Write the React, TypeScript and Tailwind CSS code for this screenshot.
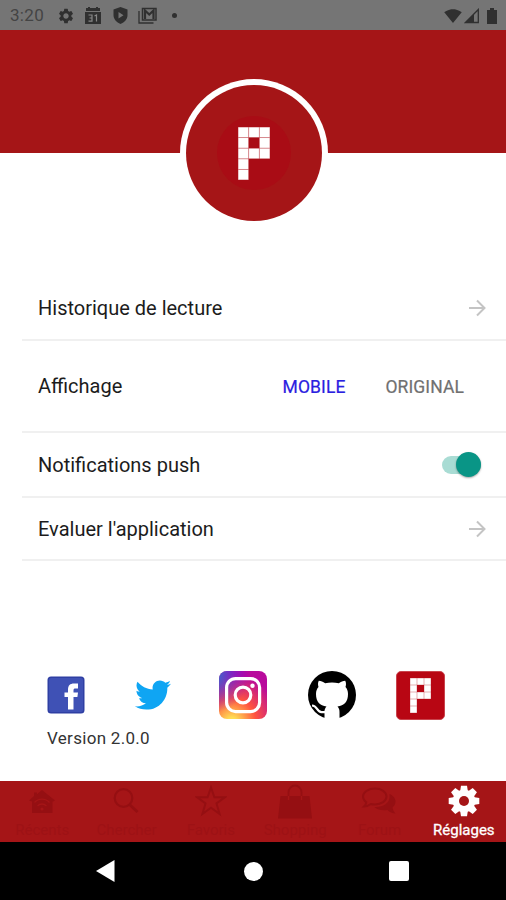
import type { ReactNode } from 'react';
import { FaTwitter } from 'react-icons/fa';
import { MdSettings, MdSignalWifi4Bar } from 'react-icons/md';

const PIXELS = [
  [0, 0], [1, 0], [2, 0],
  [0, 1], [2, 1],
  [0, 2], [1, 2], [2, 2],
  [0, 3],
  [0, 4],
];

function PixelLogo({ className }: { className: string }) {
  return (
    <svg viewBox="0 0 30 50" preserveAspectRatio="none" className={className}>
      <path d="M0 0H30V30H10V50H0ZM10 10V20H20V10Z" fill="#cf7278" fillRule="evenodd" />
      {PIXELS.map(([x, y]) => (
        <rect key={`${x}-${y}`} x={x * 10 + 0.4} y={y * 10 + 0.4} width="9.2" height="9.2" fill="#fff" />
      ))}
    </svg>
  );
}

function StatusBar() {
  return (
    <div className="flex h-[30px] items-center bg-[#757575] pt-px pl-[10px] pr-[9px] text-[#303030]">
      <span className="w-[47px] text-[17px] tracking-[0.3px] text-[#444]">3:20</span>
      <MdSettings size={18} />
      <svg viewBox="0 0 16 18" className="ml-[10px] h-[18px] w-4" fill="currentColor">
        <path d="M1 1h2V0h2v1h6V0h2v1h2v3H1zM0 5h16v12H0z" />
        <path d="M3.5 8H7v6.2H3.5M4.5 11H7M9.5 9l2-1v6.5" fill="none" stroke="#888" strokeWidth="1.2" />
      </svg>
      <svg viewBox="0 0 15 17" className="ml-[12px] h-[17px] w-[15px]" fill="currentColor">
        <path d="M7.5 0 14.5 2.5V8C14.5 12 11.5 15.5 7.5 17 3.5 15.5 .5 12 .5 8V2.5Z" />
        <path d="M5.5 5v6.5l5-3.25z" fill="#757575" />
      </svg>
      <svg viewBox="0 0 19 17" className="ml-[10px] h-[17px] w-[19px]" fill="none" stroke="currentColor">
        <path d="M1 4v12h14.5" strokeWidth="1.3" />
        <path d="M4.5 1.5h13.500v11.500H4.500z" strokeWidth="1.5" />
        <path d="M7 12V3.500l4.250 4L15.500 3.500v8.500" strokeWidth="2.2" />
      </svg>
      <span className="ml-[15px] size-[5px] rounded-full bg-current" />
      <div className="ml-auto flex items-center">
        <MdSignalWifi4Bar size={18} />
        <svg viewBox="0 0 16 16" className="ml-[2px] size-4">
          <path d="M14.3 1.500V14.500H1.500Z" fill="none" stroke="currentColor" strokeWidth="1.3" />
          <path d="M1 15 10 6V15Z" fill="currentColor" />
        </svg>
        <svg viewBox="0 0 10 16" className="ml-[7px] h-4 w-[10px]" fill="currentColor">
          <path d="M3 0h4v2h3v14H0V2h3z" />
        </svg>
      </div>
    </div>
  );
}

function SettingRow({ label, className, children }: { label: string; className: string; children: ReactNode }) {
  return (
    <div className={`ml-[22px] flex items-center border-b-2 border-[#f0f0f0] pl-4 ${className}`}>
      <span className="text-[20px] text-[#1c1c1c]">{label}</span>
      <div className="ml-auto flex items-center">{children}</div>
    </div>
  );
}

function Arrow() {
  return (
    <svg viewBox="0 0 18 18" className="mr-[20px] size-[18px]" fill="none" stroke="#c4c4c4" strokeWidth="2">
      <path d="M1 9H16M9 1.500 16.500 9 9 16.500" />
    </svg>
  );
}

function FacebookIcon() {
  return (
    <svg viewBox="0 0 38 38" className="size-[38px]">
      <rect x=".5" y=".5" width="37" height="37" rx="3.5" fill="#2f3fa3" />
      <rect x="2" y="2" width="34" height="34" rx="2" fill="#3f51b5" />
      <path d="M21 33.500V21H17.500V16.500H21V13.500C21 9.500 23 7.500 27 7.500H31V12.500H28.500C27 12.500 26.500 13 26.500 14.500V16.500H31L30.400 21H26.500V33.500Z" fill="#fff" />
    </svg>
  );
}

function InstagramIcon() {
  return (
    <svg viewBox="0 0 48 48" className="size-12">
      <defs>
        <radialGradient id="ig-warm" cx=".27" cy="1.07" r="1">
          <stop offset="0" stopColor="#fd5" />
          <stop offset=".1" stopColor="#fd5" />
          <stop offset=".5" stopColor="#ff543e" />
          <stop offset="1" stopColor="#b80a9c" />
        </radialGradient>
        <radialGradient id="ig-cool" cx="-.16" cy=".07" r=".8">
          <stop offset="0" stopColor="#3771c8" />
          <stop offset=".13" stopColor="#3771c8" />
          <stop offset="1" stopColor="#60f" stopOpacity="0" />
        </radialGradient>
      </defs>
      <rect width="48" height="48" rx="8" fill="url(#ig-warm)" />
      <rect width="48" height="48" rx="8" fill="url(#ig-cool)" />
      <g fill="none" stroke="#fff" strokeWidth="3.2">
        <rect x="7.6" y="7.6" width="33" height="33" rx="9" />
        <circle cx="24" cy="24" r="7.8" />
      </g>
      <circle cx="33.5" cy="14.7" r="2.2" fill="#fff" />
    </svg>
  );
}

function GithubIcon() {
  return (
    <svg viewBox="0 0 48 48" className="size-12">
      <circle cx="24" cy="24" r="24" fill="#000" />
      <path d="M16.500 49V39.500C17 37.500 17.500 36.500 18.500 35.500C12 34.500 8 31 8 23C8 20 9 17.500 10.500 16C9.800 14 9.800 11.500 10.800 9.800C13 9.800 15 10.800 17.200 12.300C21.500 11.200 26.500 11.200 30.800 12.300C33 10.800 35 9.800 37.200 9.800C38.200 11.500 38.200 14 37.500 16C39 17.500 40 20 40 23C40 31 36 34.500 29.500 35.500C31 37 31.500 38.500 31.500 41V49Z" fill="#fff" />
      <path d="M4 34.500C9.500 34.500 8.500 41 13.500 41.200H18" fill="none" stroke="#fff" strokeWidth="2.2" />
    </svg>
  );
}

function HomeIcon() {
  return (
    <svg viewBox="0 0 26 26" className="size-[26px]">
      <path d="M13 2 26 12.500l-2 1-.5.1V25H3V13.600L0 12.500 5 8V4.500h3v1.700z" fill="currentColor" />
      <path d="M5.500 14.500c4-4.500 11-4.500 15 0M8.500 18c2.500-2.700 6.500-2.700 9 0" fill="none" stroke="#a51517" strokeWidth="1.3" />
      <circle cx="13" cy="21" r="1.6" fill="#a51517" />
    </svg>
  );
}

function SearchIcon() {
  return (
    <svg viewBox="0 0 26 26" className="size-[26px]" fill="none" stroke="currentColor">
      <circle cx="10.500" cy="10" r="8.800" strokeWidth="2.200" />
      <path d="M16.500 16.500 24.500 24" strokeWidth="2.800" />
    </svg>
  );
}

function StarIcon() {
  return (
    <svg viewBox="0 0 32 32" className="size-8" fill="none" stroke="currentColor" strokeWidth="2">
      <path d="M16 2.500 19.400 12.300H29.800L21.500 18.500 24.600 29 16 22.700 7.400 29 10.500 18.500 2.200 12.300H12.600Z" />
    </svg>
  );
}

function BagIcon() {
  return (
    <svg viewBox="0 0 34 36" className="h-9 w-[34px]">
      <path d="M2.500 13H31.500L34 35.500H0Z" fill="currentColor" />
      <path d="M10.500 16V9.500a6.500 7 0 0 1 13 0v6.500" fill="none" stroke="currentColor" strokeWidth="1.800" />
      <path d="M10.500 13v4M23.500 13v4" stroke="#a51517" strokeWidth="1.500" />
    </svg>
  );
}

function ChatIcon() {
  return (
    <svg viewBox="0 0 36 30" className="h-[30px] w-9">
      <path d="M14 2.500C20.500 2.500 25.500 6 25.500 10.500S20.500 18.500 14 18.500C12.500 18.500 11 18.300 9.800 18C7.500 19.800 5 20.500 3 20.500C4.300 19.300 5.200 17.700 5.300 16.200C3.300 14.800 2 12.800 2 10.500C2 6 7.500 2.500 14 2.500Z" fill="none" stroke="currentColor" strokeWidth="2" />
      <path d="M28.500 8C32 9.500 34.500 12.300 34.500 15.500C34.500 18 33.200 20 31.500 21.500C32 24 33 26 34.500 27.500C31.500 27.500 28.500 26 26.500 24C21.500 25 16 23.700 13.500 21C21.500 21.500 28.500 17.500 28.500 11Z" fill="currentColor" />
    </svg>
  );
}

function GearIcon() {
  return (
    <svg viewBox="-16 -16 32 32" className="size-8">
      {[0, 45, 90, 135].map((deg) => (
        <path key={deg} d="M-3 -15.300H3L4 -9V9L3 15.300H-3L-4 9V-9Z" transform={`rotate(${deg})`} fill="#fff" />
      ))}
      <circle r="11.300" fill="#fff" />
      <circle r="5" fill="#a51517" />
    </svg>
  );
}

const TABS = [
  { label: 'Récents', icon: <HomeIcon /> },
  { label: 'Chercher', icon: <SearchIcon /> },
  { label: 'Favoris', icon: <StarIcon /> },
  { label: 'Shopping', icon: <BagIcon /> },
  { label: 'Forum', icon: <ChatIcon /> },
  { label: 'Réglages', icon: <GearIcon />, active: true },
];

export default function App() {
  return (
    <div className="flex h-[900px] w-[506px] flex-col overflow-hidden bg-white font-['Roboto',sans-serif]">
      <StatusBar />

      {/* Header */}
      <div className="flex h-[123px] shrink-0 justify-center bg-[#a51517] pt-[49px]">
        <div className="z-10 ml-px flex size-[148px] shrink-0 items-center justify-center rounded-full bg-white">
          <div className="flex size-[136px] items-center justify-center rounded-full bg-[#a51517]">
            <div className="flex size-[74px] items-center justify-center rounded-full bg-[#a90c15]">
              <PixelLogo className="h-[53px] w-[32px]" />
            </div>
          </div>
        </div>
      </div>

      {/* Settings */}
      <div className="pt-[123px]">
        <SettingRow label="Historique de lecture" className="h-[65px]">
          <Arrow />
        </SettingRow>
        <SettingRow label="Affichage" className="h-[92px]">
          <div className="flex gap-[40px] pt-[2px] pr-[42px] text-[17.5px] tracking-[0.1px]">
            <button className="text-[#2a20e0] [-webkit-text-stroke:0.2px]">MOBILE</button>
            <button className="text-[#707070] [-webkit-text-stroke:0.2px]">ORIGINAL</button>
          </div>
        </SettingRow>
        <SettingRow label="Notifications push" className="h-[65px]">
          <div className="mr-[25px] flex h-[18px] w-[39px] items-center justify-end rounded-full bg-[#a9dcd4]">
            <span className="size-[25px] shrink-0 rounded-full bg-[#099586] shadow-[0_1px_2px_rgba(0,0,0,0.35)]" />
          </div>
        </SettingRow>
        <SettingRow label="Evaluer l'application" className="h-[63px]">
          <Arrow />
        </SettingRow>
      </div>

      {/* Links */}
      <div className="mt-[109px] flex h-[50px] items-center pl-[47px]">
        <FacebookIcon />
        <FaTwitter size={36} className="ml-[50px] text-[#0fa5f3]" />
        <div className="ml-[48px]"><InstagramIcon /></div>
        <div className="ml-[41px]"><GithubIcon /></div>
        <div className="ml-[40px] flex size-[49px] items-center justify-center rounded-[5px] border border-[#c9444d] bg-[#b80613]">
          <PixelLogo className="h-[35px] w-[21px]" />
        </div>
      </div>
      <p className="mt-[6px] pl-[47px] text-[17px] leading-6 tracking-[0.3px] text-[#333]">Version 2.0.0</p>

      {/* Tabs */}
      <nav className="mt-auto grid h-[61px] shrink-0 grid-cols-6 bg-[#a51517]">
        {TABS.map((tab) => (
          <div key={tab.label} className={`flex flex-col items-center ${tab.active ? 'text-white' : 'text-[#950f12]'}`}>
            <div className="flex h-[40px] items-center justify-center">{tab.icon}</div>
            <span className={`text-[15px] leading-[18px] ${tab.active ? '[-webkit-text-stroke:0.3px]' : 'text-[#9d1215]'}`}>{tab.label}</span>
          </div>
        ))}
      </nav>

      <div className="flex h-[58px] shrink-0 items-center justify-between bg-black pl-[96px] pr-[97px]">
        <svg viewBox="0 0 19 22" className="h-[22px] w-[19px]"><path d="M0 11 18.500 0V22Z" fill="#fff" /></svg>
        <span className="ml-[2px] size-[19px] rounded-full bg-white" />
        <span className="size-[20px] rounded-[2px] bg-white" />
      </div>
    </div>
  );
}
